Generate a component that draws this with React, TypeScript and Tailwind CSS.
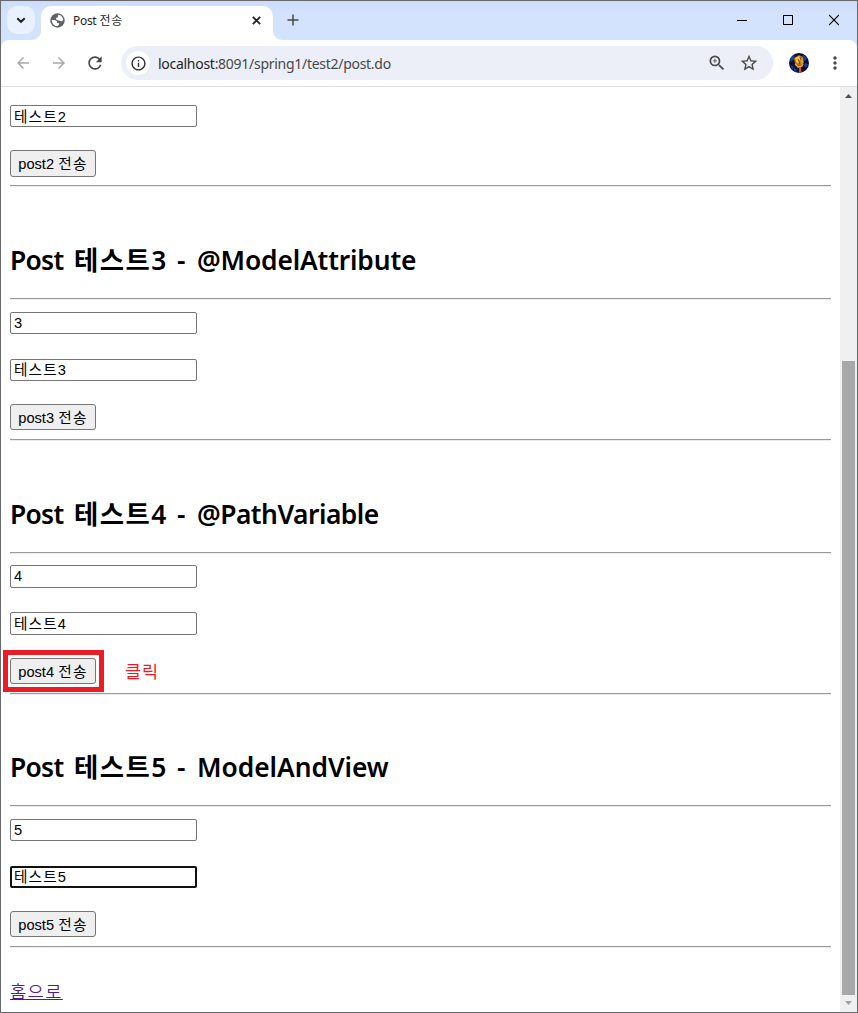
import type { ReactNode } from "react";
import {
  MdArrowBack,
  MdArrowForward,
  MdMoreVert,
  MdOutlineInfo,
  MdRefresh,
  MdStarBorder,
  MdZoomIn,
} from "react-icons/md";

const UI = "font-['Noto_Sans','Noto_Sans_CJK_KR',sans-serif]";
const FORM = "font-['Liberation_Sans','Noto_Sans_CJK_KR',sans-serif]";

function Globe() {
  return (
    <svg className="shrink-0" width="15" height="15" viewBox="0 0 15 15">
      <circle cx="7.5" cy="7.5" r="7.2" fill="#5f6368" />
      <path d="M8.2 1.8C10.9 2 13.1 4.5 13.2 7.2L11.2 8.5 9.4 7.6 7.5 7.3 6 6.2 6.2 4.8 8 4.3Z" fill="#fff" />
      <path d="M1.8 7H4.8L6.8 8.3 7.2 9.9 9.3 10.3 8.9 11.7 7.3 13.2C4.2 13.1 1.7 10.3 1.8 7Z" fill="#fff" />
    </svg>
  );
}

function TabStrip() {
  return (
    <div className="flex h-[40px] shrink-0 bg-linear-to-b from-[#ccdcfb] to-[#d3e3fd] to-30%">
      <div className="mt-[5px] ml-[6px] flex size-7 items-center justify-center rounded-[10px] bg-[#e9f1fe]">
        <svg width="10" height="8" viewBox="0 0 10 8" fill="none" stroke="#1f1f1f" strokeWidth="1.9">
          <path d="M1.3 2.2 5 5.8 8.7 2.2" />
        </svg>
      </div>
      <svg className="ml-[-4px] shrink-0" width="10" height="40" viewBox="0 0 10 40">
        <path d="M10 29V40H0V39C6 39 10 35 10 29Z" fill="#fff" />
      </svg>
      <div className="mt-[5px] flex w-[232px] items-center rounded-t-[10px] bg-white pb-[7px] pl-[9px]">
        <Globe />
        <span className="mt-[2px] ml-2 w-[170px] text-[12px] leading-4 whitespace-nowrap text-[#1f1f1f]">
          <span className="tracking-[-0.3px]">Post</span> <span className="tracking-[0.8px]">전송</span>
        </span>
        <svg className="ml-[9px] shrink-0" width="9" height="9" viewBox="0 0 9 9">
          <path d="M.8.8l7.4 7.4M8.2.8L.8 8.2" stroke="#1f1f1f" strokeWidth="1.7" />
        </svg>
      </div>
      <svg className="shrink-0" width="10" height="40" viewBox="0 0 10 40">
        <path d="M0 29V40H10V39C4 39 0 35 0 29Z" fill="#fff" />
      </svg>
      <svg className="mt-[13px] ml-[4px]" width="12" height="12" viewBox="0 0 12 12" stroke="#474747" strokeWidth="1.5">
        <path d="M6 .5v11M.5 6h11" />
      </svg>
      <div className="mt-[13px] mr-[18px] ml-auto flex gap-[36px]">
        <svg width="10" height="12" viewBox="0 0 10 12" shapeRendering="crispEdges">
          <path d="M0 6.5h10" stroke="#000" />
        </svg>
        <svg width="10" height="12" viewBox="0 0 10 12" shapeRendering="crispEdges">
          <path d="M.5 1.5h9v9h-9z" fill="none" stroke="#000" />
        </svg>
        <svg width="10" height="12" viewBox="0 0 10 12">
          <path d="M0 1l10 10M10 1L0 11" stroke="#000" strokeWidth="1.1" />
        </svg>
      </div>
    </div>
  );
}

function Avatar() {
  return (
    <svg width="20" height="20" viewBox="0 0 20 20">
      <defs>
        <clipPath id="round">
          <circle cx="10" cy="10" r="10" />
        </clipPath>
      </defs>
      <g clipPath="url(#round)">
        <rect width="20" height="20" fill="#080d38" />
        <path d="M1 5l4-3 1 4-4 3zM14 2l4 3-2 3-3-3zM2 12l3 2-2 3zM16 10l3 1-2 4-2-2zM5 15l3 1-1 3-2-1z" fill="#173e9b" />
        <path d="M5 5l5-3 4 2 1 5-2 5-4 1-3-4z" fill="#b5651a" />
        <path d="M6 5l4-2 2 1-3 7-2-2z" fill="#f0c52c" />
        <path d="M11 6l3-1v5l-2 2z" fill="#dda02a" />
        <path d="M9 6l2 5M11 4l1 3" fill="none" stroke="#7a2c10" strokeWidth=".8" />
        <path d="M6 11l3 3 4-1 1-2" fill="none" stroke="#e9b22d" strokeWidth="1.2" />
        <path d="M10 14h2l.5 6H10z" fill="#e84b20" />
      </g>
    </svg>
  );
}

function Toolbar() {
  return (
    <div className="-mt-px flex h-[47px] shrink-0 bg-[#d3e3fd]">
      <div className="flex flex-1 items-center rounded-t-[8px] border-b border-[#dfe0e2] bg-white pl-[13px]">
        <MdArrowBack size={18} color="#a9a9a9" />
        <MdArrowForward size={18} color="#a9a9a9" className="ml-[18px]" />
        <MdRefresh size={20} color="#474747" className="ml-[17px]" />
        <div className="ml-4 flex h-[34px] w-[652px] items-center rounded-full bg-[#eceff7] pl-[5px]">
          <div className="flex size-6 items-center justify-center rounded-full bg-white">
            <MdOutlineInfo size={17} color="#303030" />
          </div>
          <span className="mt-px ml-2 text-[14px] leading-5 tracking-[-0.28px] whitespace-nowrap text-[#474747]">
            <span className="text-[#1f1f1f]">localhost</span>:8091/spring1/test2/post.do
          </span>
          <MdZoomIn size={20} color="#474747" className="mr-3 ml-auto" />
          <MdStarBorder size={20} color="#474747" className="mr-[14px]" />
        </div>
        <div className="ml-4">
          <Avatar />
        </div>
        <MdMoreVert size={20} color="#474747" className="ml-4" />
      </div>
    </div>
  );
}

function Field({ value, focused = false }: { value: string; focused?: boolean }) {
  const numeric = /^\d+$/.test(value);
  return (
    <input
      readOnly
      value={value}
      className={`block h-[22.4px] w-[187px] rounded-[2px] bg-white text-[14.67px] tracking-[1.1px] text-black outline-none ${
        numeric ? "pb-0" : "pb-[2px]"
      } ${focused ? "border-2 border-[#101010] px-[2px]" : "border border-[#767676] px-[3px]"} ${FORM}`}
    />
  );
}

function SendButton({ n }: { n: number }) {
  return (
    <button
      className={`block h-[26.2px] w-[86px] rounded-[3px] border border-[#767676] bg-[#efefef] pt-px text-[14.67px] leading-6 whitespace-nowrap text-black ${FORM}`}
    >
      post{n} <span className="tracking-[1.3px]">전송</span>
    </button>
  );
}

function Rule() {
  return <div className="h-[2px] border-t border-b border-t-[#9a9a9a] border-b-[#ececec]" />;
}

function Section({ n, title, focused = false, note }: { n: number; title: ReactNode; focused?: boolean; note?: ReactNode }) {
  return (
    <section className="h-[253.6px]">
      <h2 className="flex h-[110.8px] items-end pb-[20px] text-[26.4px] leading-9 font-semibold whitespace-nowrap text-black">
        <span className="w-[64px] tracking-[-0.7px]">Post</span>
        <span className="w-[103px] tracking-[1.5px]">테스트{n}</span>
        <span className="w-[20px]">-</span>
        {title}
      </h2>
      <Rule />
      <div className="mt-[11.4px]">
        <Field value={String(n)} />
      </div>
      <div className="mt-[24.6px]">
        <Field value={`테스트${n}`} focused={focused} />
      </div>
      <div className="relative mt-[23px] mb-[8.8px]">
        <SendButton n={n} />
        {note}
      </div>
      <Rule />
    </section>
  );
}

function ClickNote() {
  return (
    <>
      <div className="absolute -top-[8px] -left-[7px] h-[42px] w-[101px] border-5 border-[#ed1c24]" />
      <span className="absolute top-px left-[115px] text-[17.5px] leading-6 tracking-[1px] whitespace-nowrap text-[#ed1c24]">
        클릭
      </span>
    </>
  );
}

function Scrollbar() {
  return (
    <div className="flex w-[17px] shrink-0 flex-col items-center bg-[#f0f0f0]">
      <svg className="mt-[7px] shrink-0" width="7" height="4" viewBox="0 0 7 4">
        <path d="M3.5 0 7 4H0z" fill="#505050" />
      </svg>
      <div className="mt-[263px] h-[634px] w-[13px] shrink-0 bg-[#a8a8a8]" />
      <svg className="mt-[6px] shrink-0" width="7" height="4" viewBox="0 0 7 4">
        <path d="M0 0h7L3.5 4z" fill="#a3a3a3" />
      </svg>
    </div>
  );
}

export default function App() {
  return (
    <div className={`flex h-[1013px] w-[858px] flex-col overflow-hidden border border-[#67696d] bg-white ${UI}`}>
      <TabStrip />
      <Toolbar />
      <div className="flex min-h-0 flex-1">
        <main className="min-w-0 flex-1 pr-[9px] pl-[9px]">
          <div className="mt-[18px]">
            <Field value="테스트2" />
          </div>
          <div className="mt-[23px] mb-[8.8px]">
            <SendButton n={2} />
          </div>
          <Rule />
          <Section n={3} title={<span className="tracking-[-0.15px]">@ModelAttribute</span>} />
          <Section n={4} title={<span className="tracking-[-0.5px]">@PathVariable</span>} note={<ClickNote />} />
          <Section n={5} title={<span className="tracking-[-0.05px]">ModelAndView</span>} focused />
          <a
            href="#home"
            className="mt-[31px] block w-fit text-[17.6px] leading-6 font-[350] tracking-[1.4px] text-[#551a8b] underline"
          >
            홈으로
          </a>
        </main>
        <Scrollbar />
      </div>
    </div>
  );
}
